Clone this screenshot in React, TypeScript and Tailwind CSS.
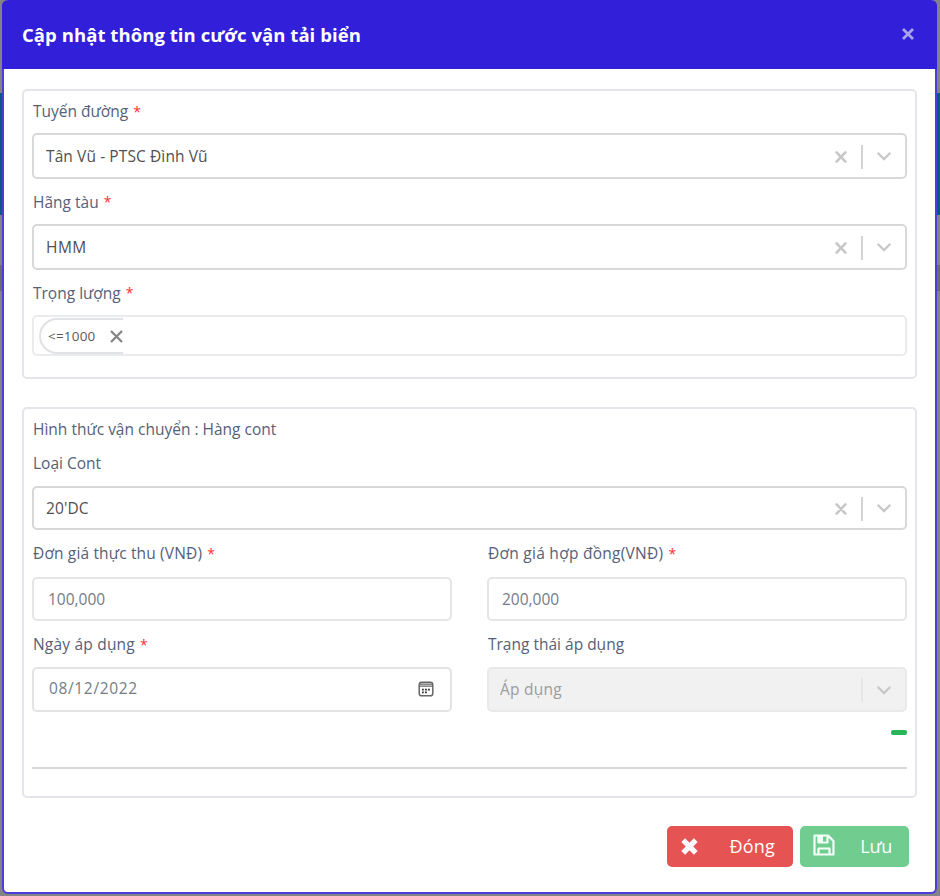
import type { ReactNode } from "react";

function Label({ children, required, className = "" }: { children: ReactNode; required?: boolean; className?: string }) {
  return (
    <div className={`flex items-center pl-px whitespace-pre text-[15.5px] text-[#566078] ${className}`}>
      <span>{children}</span>
      {required && <span className="-mt-[2px] ml-[5px] text-[14px] text-[#ff3030]">*</span>}
    </div>
  );
}

function CrossIcon() {
  return (
    <svg className="h-3 w-3" viewBox="0 0 12 12" fill="none" stroke="#c6c6c6" strokeWidth="2.5" strokeLinecap="round">
      <path d="M1.6 1.4 10.4 10.6M10.4 1.4 1.6 10.6" />
    </svg>
  );
}

function ChevronIcon() {
  return (
    <svg className="h-[9px] w-[14px]" viewBox="0 0 14 9" fill="none" stroke="#c8c8c8" strokeWidth="2.4" strokeLinecap="round">
      <path d="M1.4 1.5 7 7 12.6 1.5" />
    </svg>
  );
}

function Select({ value, disabled, className = "" }: { value: string; disabled?: boolean; className?: string }) {
  return (
    <div
      className={`flex items-center rounded-[5px] border-2 pr-[14px] text-[15.5px] ${
        disabled ? "border-[#e9e9e9] bg-[#f1f1f1] pl-[11px] text-[#9c9c9c]" : "border-[#d8d8d8] bg-white pl-[12px] text-[#505050]"
      } ${className}`}
    >
      <span className="flex-1">{value}</span>
      {!disabled && <CrossIcon />}
      <span className={`mr-[14px] ml-[14px] h-6 w-[2px] ${disabled ? "bg-[#e6e6e6]" : "bg-[#d3d3d3]"}`} />
      <ChevronIcon />
    </div>
  );
}

function CalendarIcon() {
  return (
    <svg className="-mt-px h-4 w-4" viewBox="0 0 16 16" fill="none">
      <rect x="1.2" y="1.2" width="13.6" height="13.6" rx="2.6" stroke="#666" strokeWidth="1.5" />
      <path d="M1.5 3.2h13M1.5 5.2h13" stroke="#666" strokeWidth="1.2" />
      <path d="M6.9 8.6h2M9.9 8.6h2M4 8.6h1.8M4 11.4h1.8M6.9 11.4h2" stroke="#3a3a3a" strokeWidth="1.8" />
    </svg>
  );
}

export default function App() {
  return (
    <div className="relative h-[896px] w-[940px] overflow-hidden bg-[#838387] px-[2px] font-['Open_Sans','Noto_Sans',sans-serif]">
      <div className="absolute top-[93px] left-0 h-[122px] w-full bg-[#075a80]" />
      <div className="absolute top-[265px] left-0 h-[26px] w-full bg-[#6c6c70]" />
      <div className="relative flex h-[894px] w-[935px] flex-col rounded-[6px] border-2 border-t-0 border-[#4c3ddb] bg-white">
        <header className="-mx-[2px] flex h-[69px] shrink-0 items-center justify-between rounded-t-[6px] bg-[#311fd9] pr-[23px] pl-5">
          <h1 className="text-[18.5px] font-bold tracking-[0.06px] text-white">Cập nhật thông tin cước vận tải biển</h1>
          <svg className="-mt-[2px] h-3 w-3" viewBox="0 0 12 12" fill="none" stroke="#aaa3ee" strokeWidth="2.8">
            <path d="M1 1 11 11M11 1 1 11" />
          </svg>
        </header>

        <section className="mr-[18px] ml-[18px] mt-[20px] h-[290px] shrink-0 rounded-[5px] border-2 border-[#e4e5ea] px-[8px]">
          <Label required className="h-[42px]">Tuyến đường</Label>
          <Select value="Tân Vũ - PTSC Đình Vũ" className="h-[46px] pt-px tracking-[0.1px]" />
          <Label required className="h-[45px] pt-[2px]">Hãng tàu</Label>
          <Select value="HMM" className="h-[46px] pt-px tracking-[0.5px]" />
          <Label required className="h-[45px] pt-[2px]">Trọng lượng</Label>
          <div className="flex h-[41px] items-center rounded-[5px] border-2 border-[#e9ebed] pl-[5px]">
            <div className="-mb-px flex h-[36px] w-[84px] items-center rounded-l-full border-2 border-r-0 border-[#e0e2e5] pl-[7px] text-[13.5px] tracking-[0.2px] text-[#5a5a5a]">
              <span className="flex-1">&lt;=1000</span>
              <svg className="h-[13px] w-[13px]" viewBox="0 0 13 13" fill="none" stroke="#858585" strokeWidth="2.3">
                <path d="M1 1 12 12M12 1 1 12" />
              </svg>
            </div>
          </div>
        </section>

        <section className="mr-[18px] ml-[18px] mt-[28px] h-[391px] shrink-0 rounded-[5px] border-2 border-[#e4e5ea] px-[8px]">
          <Label className="mt-[3px] h-[34px] pt-px">Hình thức vận chuyển : Hàng cont</Label>
          <Label className="h-[34px] pt-px">Loại Cont</Label>
          <Select value="20'DC" className="mt-[6px] h-[44px] pt-px tracking-[0.1px]" />
          <div className="grid grid-cols-2 gap-x-[35px]">
            <div>
              <Label required className="h-[47px] pt-px tracking-[0.15px]">Đơn giá thực thu (VNĐ)</Label>
              <div className="flex h-[44px] items-center rounded-[5px] border-2 border-[#e5e5e5] pt-px pl-[14px] text-[15.5px] text-[#747c88]">100,000</div>
              <Label required className="h-[46px] pt-[2px] tracking-[0.2px]">Ngày áp dụng</Label>
              <div className="flex h-[45px] items-center justify-between rounded-[5px] border-2 border-[#e3e3e3] pr-[16px] pl-[15px] text-[15.5px] tracking-[0.65px] text-[#747c88]">
                <span className="-mt-px">08/12/2022</span>
                <CalendarIcon />
              </div>
            </div>
            <div>
              <Label required className="h-[47px] pt-px tracking-[0.27px]">Đơn giá hợp đồng(VNĐ)</Label>
              <div className="flex h-[44px] items-center rounded-[5px] border-2 border-[#e5e5e5] pt-px pl-[13px] text-[15.5px] text-[#747c88]">200,000</div>
              <Label className="h-[46px] pt-[2px]">Trạng thái áp dụng</Label>
              <Select value="Áp dụng" disabled className="h-[45px] pt-px tracking-[0.25px]" />
            </div>
          </div>
          <div className="mt-[18px] ml-auto h-[5px] w-4 rounded-[2px] bg-[#27b75a]" />
          <div className="mt-[32px] h-[2px] bg-[#d8d8da]" />
        </section>

        <footer className="mt-[28px] mr-[26px] flex justify-end gap-[7px] text-[18px] text-white">
          <button className="flex h-[41px] w-[126px] items-center justify-between rounded-[5px] bg-[#e55353] pr-[18px] pl-[14px]">
            <svg className="-mt-px h-[17px] w-[17px]" viewBox="0 0 17 17" fill="none" stroke="#fbfbff" strokeWidth="5.4">
              <path d="M2.2 2.2 14.800 14.8M14.8 2.2 2.2 14.8" />
            </svg>
            <span className="tracking-[0.2px]">Đóng</span>
          </button>
          <button className="flex h-[41px] w-[109px] items-center justify-between rounded-[5px] bg-[#71cc90] pr-[17px] pl-[13px]">
            <svg className="-mt-[3px] h-[22px] w-[22px]" viewBox="0 0 22 22" fill="none" stroke="#f4fff7" strokeWidth="2.2" strokeLinejoin="round">
              <path d="M1.5 1.5H15L20.5 7V20.5H1.5ZM5.5 1.5V8.5H14.5V1.5M5.5 20V14.500H16.5V20" />
              <path d="M8 1.5V8" strokeWidth="4" />
            </svg>
            <span className="-tracking-[0.2px]">Lưu</span>
          </button>
        </footer>
      </div>
    </div>
  );
}
